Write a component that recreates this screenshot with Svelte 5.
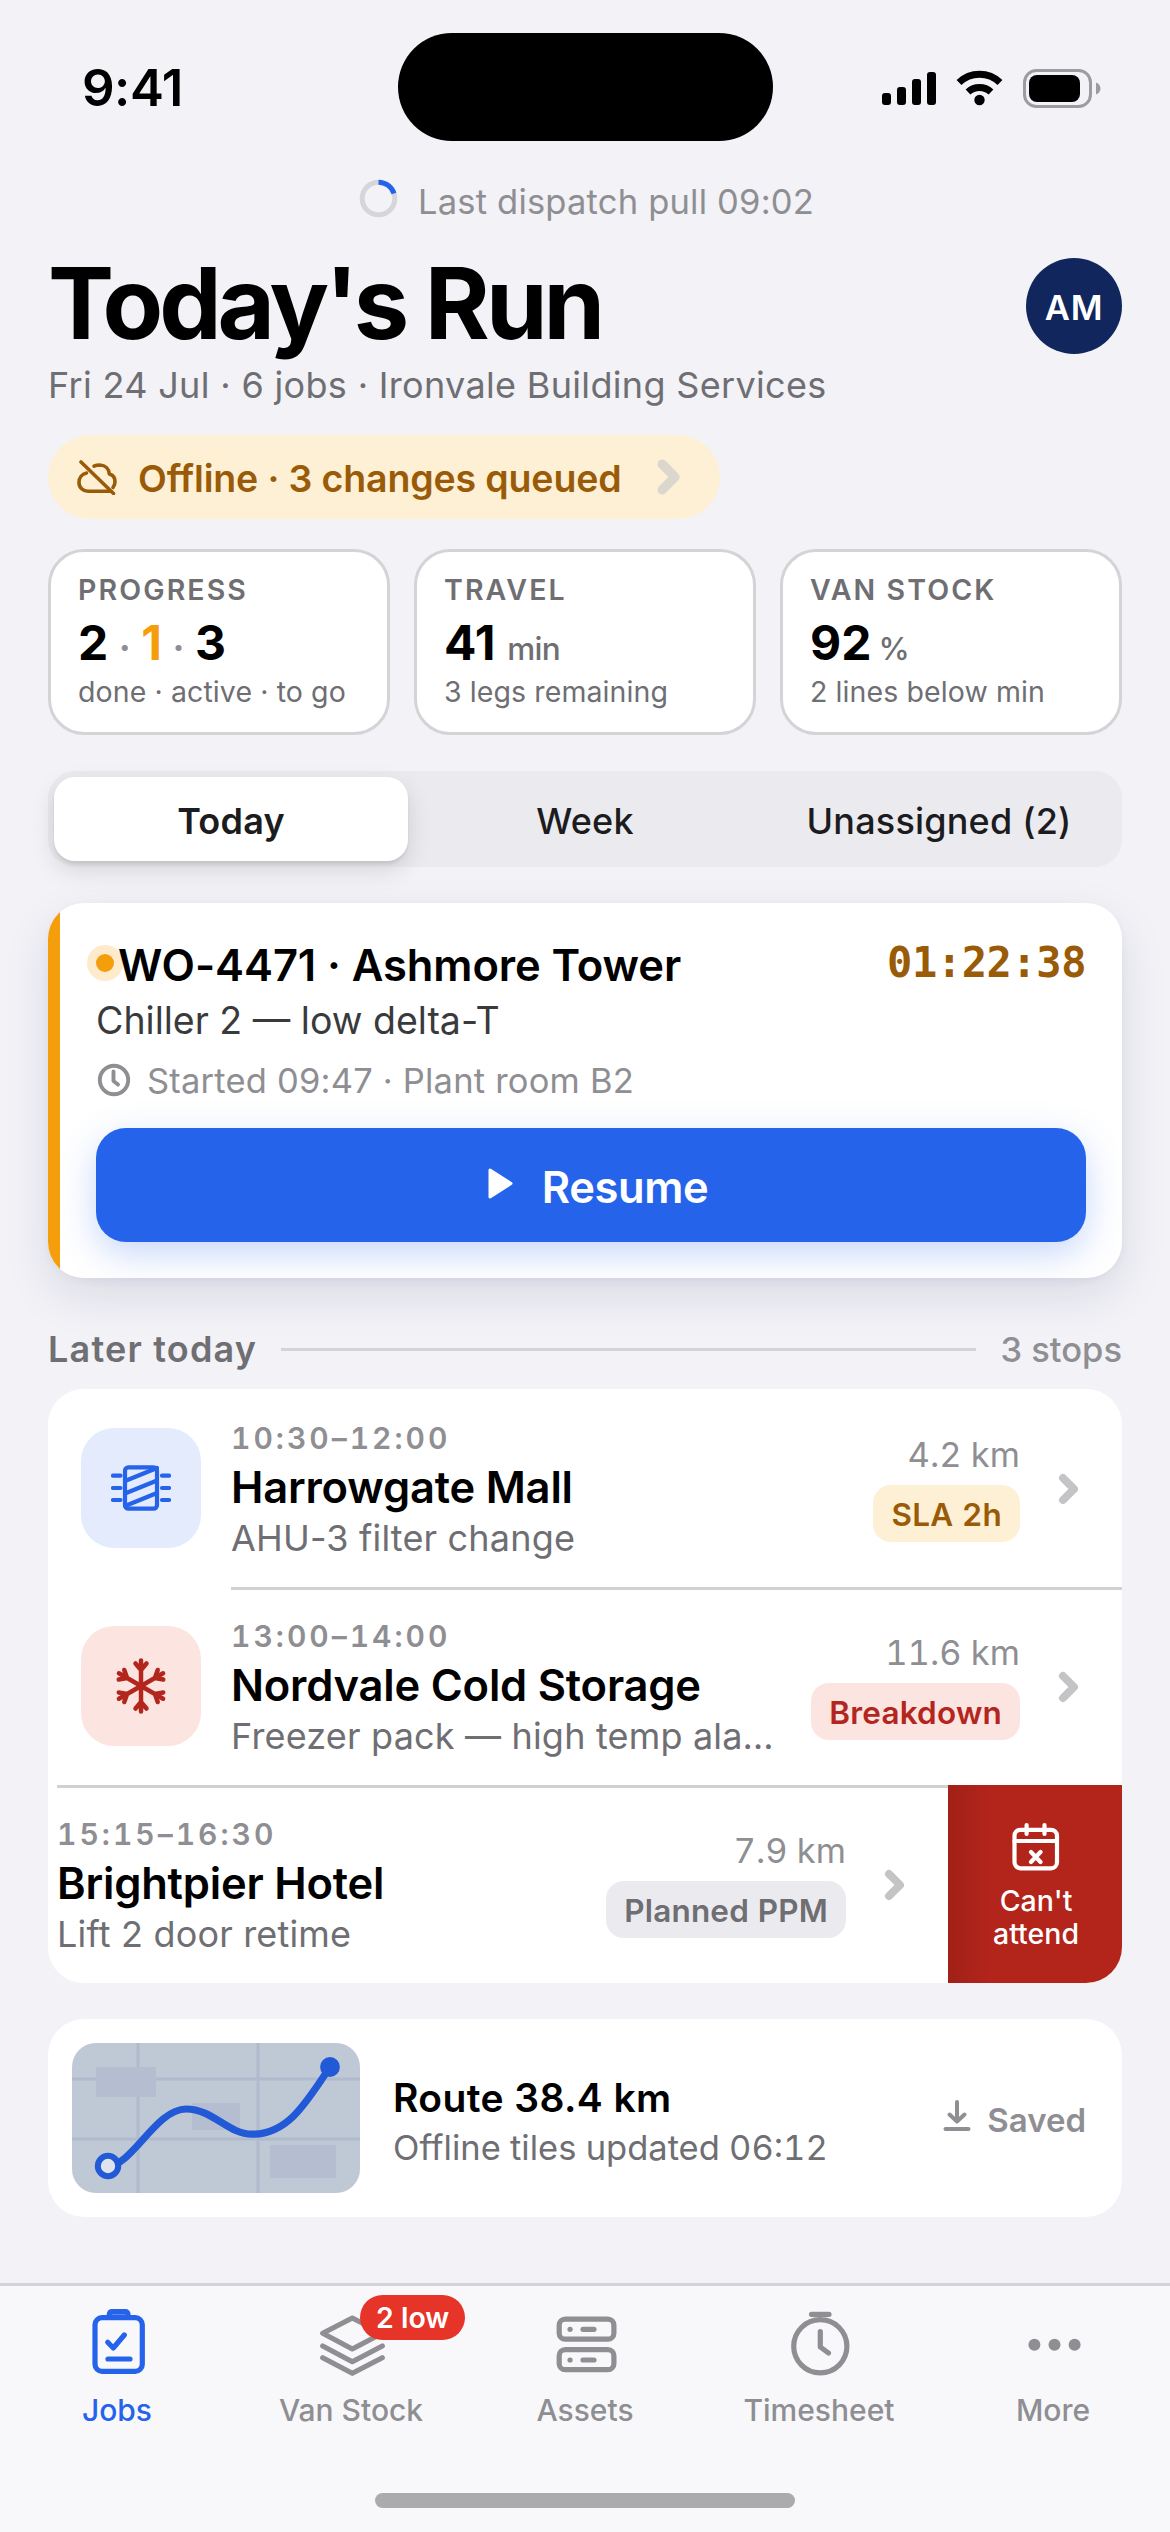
<script>
  const segments = ["Today", "Week", "Unassigned (2)"];
  let selected = "Today";

  const stops = [
    {
      time: "10:30–12:00",
      name: "Harrowgate Mall",
      task: "AHU-3 filter change",
      distance: "4.2 km",
      tag: "SLA 2h",
      tone: "amber",
      icon: "coil"
    },
    {
      time: "13:00–14:00",
      name: "Nordvale Cold Storage",
      task: "Freezer pack — high temp alarm",
      distance: "11.6 km",
      tag: "Breakdown",
      tone: "red",
      icon: "snow"
    },
    {
      time: "15:15–16:30",
      name: "Brightpier Hotel",
      task: "Lift 2 door retime",
      distance: "7.9 km",
      tag: "Planned PPM",
      tone: "grey",
      icon: null,
      swiped: true
    }
  ];

  const tabs = [
    { label: "Jobs", icon: "jobs" },
    { label: "Van Stock", icon: "stock", badge: "2 low" },
    { label: "Assets", icon: "assets" },
    { label: "Timesheet", icon: "timer" },
    { label: "More", icon: "more" }
  ];
  let activeTab = "Jobs";
</script>

<style>
  :global(body) {
    background: #f2f2f7;
  }

  .screen {
    width: 1170px;
    height: 2532px;
    overflow: hidden;
    display: flex;
    flex-direction: column;
    background: #f2f2f7;
    color: #000;
    font-family: Inter, "Liberation Sans", sans-serif;
    font-size: 36px;
  }

  svg {
    display: block;
    flex: none;
    fill: none;
    stroke: currentColor;
    stroke-linecap: round;
    stroke-linejoin: round;
  }

  button {
    font: inherit;
    color: inherit;
    border: none;
    padding: 0;
    background: none;
  }

  h1,
  h2,
  h3,
  p {
    margin: 0;
  }

  /* status bar */
  .status {
    height: 174px;
    display: grid;
    grid-template-columns: 1fr 375px 1fr;
    align-items: center;
    box-sizing: border-box;
    flex: none;
  }

  .clock {
    font-size: 51px;
    font-weight: 600;
    letter-spacing: -0.5px;
    padding-left: 82px;
  }

  .island {
    height: 108px;
    border-radius: 54px;
    background: #000;
  }

  .signals {
    display: flex;
    align-items: center;
    justify-content: flex-end;
    padding-right: 68px;
    padding-top: 2px;
  }

  /* pull to refresh */
  .pull {
    height: 54px;
    display: flex;
    align-items: center;
    justify-content: center;
    gap: 20px;
    padding-left: 3px;
    color: #8e8e93;
    font-size: 34.5px;
    letter-spacing: 0.2px;
    flex: none;
  }

  .pull svg {
    margin-top: -6px;
  }

  main {
    padding: 0 48px;
  }

  .heading {
    margin-top: 21px;
    display: flex;
    justify-content: space-between;
    align-items: center;
  }

  h1 {
    font-size: 99px;
    line-height: 108px;
    font-weight: 700;
    letter-spacing: -3.96px;
  }

  .avatar {
    width: 96px;
    height: 96px;
    box-sizing: border-box;
    padding-top: 2px;
    margin-top: 6px;
    border-radius: 50%;
    background: #10265c;
    color: #fff;
    display: flex;
    align-items: center;
    justify-content: center;
    font-size: 34.5px;
    font-weight: 600;
    letter-spacing: 0.9px;
  }

  .subtitle {
    margin-top: 6px;
    line-height: 45px;
    letter-spacing: 0.33px;
    color: #6e6e73;
  }

  .offline {
    margin-top: 27px;
    width: 672px;
    height: 84px;
    border-radius: 42px;
    box-sizing: border-box;
    padding: 0 38px 0 28px;
    display: flex;
    align-items: center;
    background: #fdf0d5;
    color: #9a5b08;
    font-size: 37.5px;
    font-weight: 600;
    letter-spacing: -0.15px;
  }

  .offline span {
    margin: 2px auto 0 20px;
  }

  /* stat cards */
  .stats {
    margin-top: 30px;
    display: grid;
    grid-template-columns: repeat(3, 1fr);
    gap: 24px;
  }

  .stat {
    height: 186px;
    box-sizing: border-box;
    border: 3px solid #d4d4d7;
    border-radius: 36px;
    background: #fff;
    padding: 24px 27px;
    color: #6e6e73;
  }

  .stat h3 {
    font-size: 28.5px;
    line-height: 28px;
    font-weight: 600;
    letter-spacing: 2.1px;
  }

  .value {
    margin-top: 6px;
    height: 66px;
    line-height: 66px;
    font-size: 48px;
    font-weight: 700;
    color: #000;
    white-space: nowrap;
  }

  .value i {
    font-style: normal;
    color: #8e8e93;
    font-size: 36px;
    margin: 0 10.5px;
  }

  .value em {
    font-style: normal;
    color: #f59e0b;
  }

  .value small {
    font-size: 31.5px;
    font-weight: 500;
    letter-spacing: -0.7px;
    color: #6e6e73;
    margin-left: 12px;
  }

  .value .percent {
    margin-left: 7px;
  }

  .stat p:last-child {
    font-size: 28.5px;
    line-height: 32px;
    letter-spacing: 0.1px;
    white-space: nowrap;
  }

  /* segmented control */
  .segments {
    margin-top: 36px;
    height: 96px;
    box-sizing: border-box;
    padding: 6px;
    border-radius: 27px;
    background: #ebebef;
    display: grid;
    grid-template-columns: repeat(3, 1fr);
  }

  .segments button {
    border-radius: 21px;
    font-weight: 500;
    letter-spacing: 0.2px;
    color: #1c1c1e;
    padding-top: 3px;
  }

  .segments .on {
    background: #fff;
    font-weight: 600;
    box-shadow: 0 3px 3px rgba(0, 0, 0, 0.08), 0 9px 24px rgba(0, 0, 0, 0.12);
  }

  /* active job */
  .active {
    margin-top: 36px;
    height: 375px;
    box-sizing: border-box;
    padding: 36px 36px 36px 48px;
    border-radius: 36px;
    background: linear-gradient(to right, #f59e0b 12px, #fff 12px);
    box-shadow: 0 3px 9px rgba(16, 24, 64, 0.04),
      0 18px 48px rgba(16, 24, 64, 0.1);
  }

  .job {
    display: flex;
    align-items: center;
    height: 52px;
  }

  .dot {
    width: 18px;
    height: 18px;
    margin: -4px 4px 0 0;
    border-radius: 50%;
    background: #f59e0b;
    box-shadow: 0 0 0 9px #fdebcb;
  }

  .job h2 {
    font-size: 43.5px;
    line-height: 52px;
    font-weight: 600;
    letter-spacing: -0.08px;
    white-space: nowrap;
  }

  .elapsed {
    margin: -5px 0 0 auto;
    font-family: "DejaVu Sans Mono", monospace;
    font-size: 42px;
    font-weight: 700;
    letter-spacing: -0.42px;
    color: #9a5b08;
  }

  .fault {
    margin-top: 7px;
    font-size: 37.5px;
    line-height: 46px;
    color: #3a3a3c;
  }

  .started {
    margin-top: 16px;
    height: 40px;
    display: flex;
    align-items: center;
    gap: 15px;
    font-size: 34.5px;
    letter-spacing: 0.2px;
    color: #8e8e93;
  }

  .resume {
    margin-top: 28px;
    width: 100%;
    height: 114px;
    border-radius: 30px;
    background: #2563eb;
    color: #fff;
    font-size: 43.5px;
    font-weight: 600;
    letter-spacing: -0.4px;
    display: flex;
    align-items: center;
    justify-content: center;
    gap: 27px;
    padding-left: 13px;
    box-shadow: 0 12px 36px rgba(37, 99, 235, 0.25);
  }

  .resume svg {
    margin-top: -3px;
  }

  .resume span {
    padding-top: 3px;
  }

  /* later today */
  .section {
    margin: 48px 0 17px;
    height: 46px;
    display: flex;
    align-items: center;
    color: #6e6e73;
  }

  .section h2 {
    font-size: 36px;
    font-weight: 600;
    letter-spacing: 1.2px;
  }

  .section hr {
    flex: 1;
    height: 3px;
    border: none;
    margin: 0 24px;
    background: #d4d4d7;
  }

  .section span {
    font-size: 34.5px;
    font-weight: 500;
    color: #8e8e93;
  }

  .stops {
    border-radius: 36px;
    overflow: hidden;
    background: #fff;
  }

  .stop {
    display: flex;
    height: 198px;
    background: #fff;
  }

  .tile {
    width: 120px;
    height: 120px;
    margin: 39px 30px 0 33px;
    border-radius: 33px;
    display: flex;
    align-items: center;
    justify-content: center;
    flex: none;
  }

  .tile.amber {
    background: #e3ebfd;
    color: #2563eb;
  }

  .tile.red {
    background: #fce4e1;
    color: #b3261e;
  }

  .row {
    flex: 1;
    min-width: 0;
    display: flex;
    box-sizing: border-box;
    padding-right: 42px;
  }

  .stop + .stop .row {
    box-shadow: inset 0 3px #d1d1d4;
  }

  .info {
    flex: 1;
    min-width: 0;
    padding: 31px 33px 0 0;
  }

  .info p,
  .info h3 {
    white-space: nowrap;
    overflow: hidden;
    text-overflow: ellipsis;
  }

  .info .time {
    font-size: 30px;
    line-height: 36px;
    font-weight: 600;
    font-variant-numeric: tabular-nums;
    letter-spacing: 3px;
    color: #8e8e93;
  }

  .info h3 {
    margin-top: 3px;
    font-size: 43.5px;
    line-height: 56px;
    font-weight: 600;
    letter-spacing: -0.2px;
  }

  .info .task {
    margin-top: 1px;
    font-size: 36px;
    line-height: 44px;
    letter-spacing: 0.18px;
    color: #6e6e73;
  }

  .meta {
    display: flex;
    flex-direction: column;
    align-items: flex-end;
    padding-top: 48px;
    font-size: 34.5px;
    font-variant-numeric: tabular-nums;
    line-height: 36px;
    color: #8e8e93;
  }

  .tag {
    margin-top: 12px;
    height: 57px;
    line-height: 60px;
    padding: 0 18px;
    border-radius: 18px;
    font-size: 31.5px;
    font-weight: 600;
    letter-spacing: 0.2px;
  }

  .tag.amber {
    background: #fdf0d5;
    color: #9a5b08;
  }

  .tag.red {
    background: #fce4e1;
    color: #b3261e;
  }

  .tag.grey {
    background: #ebebef;
    color: #6e6e73;
  }

  .chevron {
    width: 24px;
    height: 36px;
    color: #c4c4c7;
    stroke-width: 8;
  }

  .row .chevron {
    margin: 82px 0 0 36px;
  }

  .offline .chevron {
    width: 28px;
    height: 42px;
    color: #dcd7cc;
  }

  .swiped .row {
    margin-left: 9px;
  }

  .cant {
    width: 174px;
    flex: none;
    background: linear-gradient(to right, #a12017, #b3241b 42px);
    color: #fff;
    font-size: 28.5px;
    line-height: 33px;
    font-weight: 500;
    display: flex;
    flex-direction: column;
    align-items: center;
    padding: 35px 0 0 2px;
    box-sizing: border-box;
  }

  .cant span {
    margin-top: 10px;
    width: 110px;
    text-align: center;
  }

  /* route */
  .route {
    margin-top: 36px;
    height: 198px;
    box-sizing: border-box;
    border-radius: 36px;
    padding: 0 36px 0 24px;
    background: #fff;
    display: flex;
    align-items: center;
  }

  .map {
    width: 288px;
    height: 150px;
    border-radius: 24px;
    background: #bfc8d5;
  }

  .route div {
    padding: 8px 0 0 33px;
    flex: 1;
  }

  .route h3 {
    font-size: 39px;
    line-height: 48px;
    font-weight: 600;
    letter-spacing: 0.4px;
  }

  .route p {
    margin-top: 4px;
    line-height: 44px;
    font-size: 34.5px;
    font-variant-numeric: tabular-nums;
    color: #6e6e73;
  }

  .saved {
    display: flex;
    align-items: center;
    gap: 15px;
    font-size: 33px;
    font-weight: 600;
    color: #8e8e93;
  }

  .saved svg {
    margin-top: -6px;
  }

  .saved span {
    padding-top: 4px;
  }

  /* tab bar */
  .tabs {
    position: relative;
    margin-top: auto;
    height: 249px;
    box-sizing: border-box;
    border-top: 3px solid #d4d4d7;
    background: #f8f8fb;
    padding-top: 20px;
    display: grid;
    grid-template-columns: repeat(5, 1fr);
    align-items: start;
    flex: none;
  }

  .tabs button {
    position: relative;
    display: flex;
    flex-direction: column;
    align-items: center;
    color: #8e8e93;
    font-size: 30px;
    line-height: 36px;
    font-weight: 500;
    gap: 14px;
  }

  .tabs .current {
    color: #2563eb;
  }

  .tabs svg {
    stroke-width: 5.2;
  }

  .badge {
    position: absolute;
    left: 126px;
    top: -11px;
    height: 45px;
    line-height: 46px;
    padding: 0 16px;
    border-radius: 23px;
    background: #e63429;
    color: #fff;
    font-size: 28.5px;
    font-weight: 600;
    white-space: nowrap;
  }

  .home {
    position: absolute;
    left: 375px;
    bottom: 24px;
    width: 420px;
    height: 15px;
    border-radius: 8px;
    background: #ababad;
  }
</style>

{#snippet chevron()}
  <svg class="chevron" viewBox="0 0 24 36"><path d="M7 7l11 11L7 29" /></svg>
{/snippet}

<div class="screen">
  <header class="status">
    <span class="clock">9:41</span>
    <span class="island"></span>
    <span class="signals">
      <svg width="220" height="42" viewBox="0 0 220 42">
        <g fill="#000" stroke="none">
          <rect x="0" y="26" width="9" height="12" rx="3" />
          <rect x="15" y="20" width="9" height="18" rx="3" />
          <rect x="30" y="12" width="9" height="26" rx="3" />
          <rect x="45" y="5" width="9" height="33" rx="3" />
          <circle cx="97.5" cy="33" r="5.2" />
          <rect x="147" y="8" width="51" height="27" rx="8" />
        </g>
        <path d="M77 15.5A29.5 29.5 0 0 1 118 15.5" stroke="#000" stroke-width="7" stroke-linecap="butt" />
        <path d="M86 25A17 17 0 0 1 109 25" stroke="#000" stroke-width="7" stroke-linecap="butt" />
        <rect x="142.5" y="3.5" width="66" height="36" rx="12" stroke="#9c9ca0" stroke-width="3" />
        <path d="M214 15.5C220 17.5 220 25.5 214 27.5Z" fill="#9c9ca0" stroke="none" />
      </svg>
    </span>
  </header>

  <div class="pull">
    <svg width="39" height="39" viewBox="0 0 39 39" stroke-width="5">
      <circle cx="19.5" cy="19.5" r="16.3" stroke="#d6d6da" />
      <path d="M19.5 3.2A16.3 16.3 0 0 1 35 14.5" stroke="#2563eb" stroke-linecap="butt" />
    </svg>
    <span>Last dispatch pull 09:02</span>
  </div>

  <main>
    <div class="heading">
      <h1>Today's Run</h1>
      <span class="avatar">AM</span>
    </div>
    <p class="subtitle">Fri 24 Jul · 6 jobs · Ironvale Building Services</p>

    <button class="offline">
      <svg width="42" height="36" viewBox="0 0 42 36" stroke-width="3.6">
        <path d="M5 3L37.5 34.5" />
        <path d="M10.5 14C6 15 3 19 3 23.5C3 28.5 7 32.3 12 32.3H34" />
        <path d="M18 7.2C20 6.2 22 6 24 6C29.5 6.2 33 10 33.3 15C37 16 39 19 39 22.5C39 25 38.3 27 37 28.5" />
      </svg>
      <span>Offline · 3 changes queued</span>
      {@render chevron()}
    </button>

    <section class="stats">
      <div class="stat">
        <h3>PROGRESS</h3>
        <p class="value">2<i>·</i><em>1</em><i>·</i>3</p>
        <p>done · active · to go</p>
      </div>
      <div class="stat">
        <h3>TRAVEL</h3>
        <p class="value">41<small>min</small></p>
        <p>3 legs remaining</p>
      </div>
      <div class="stat">
        <h3>VAN STOCK</h3>
        <p class="value">92<small class="percent">%</small></p>
        <p>2 lines below min</p>
      </div>
    </section>

    <nav class="segments">
      {#each segments as segment}
        <button class:on={segment === selected} on:click={() => (selected = segment)}>{segment}</button>
      {/each}
    </nav>

    <section class="active">
      <div class="job">
        <span class="dot"></span>
        <h2>WO-4471 · Ashmore Tower</h2>
        <span class="elapsed">01:22:38</span>
      </div>
      <p class="fault">Chiller 2 — low delta-T</p>
      <p class="started">
        <svg width="36" height="36" viewBox="0 0 36 36" stroke-width="3.9">
          <circle cx="18" cy="18" r="14.2" />
          <path d="M17.5 9.5V19L22 22.5" />
        </svg>
        <span>Started 09:47 · Plant room B2</span>
      </p>
      <button class="resume">
        <svg width="28" height="33" viewBox="0 0 28 33">
          <path d="M3 3L24 16.5L3 30Z" fill="#fff" stroke-width="3" />
        </svg>
        <span>Resume</span>
      </button>
    </section>

    <div class="section">
      <h2>Later today</h2>
      <hr />
      <span>3 stops</span>
    </div>

    <section class="stops">
      {#each stops as stop}
        <article class="stop" class:swiped={stop.swiped}>
          {#if stop.icon}
            <span class="tile {stop.tone}">
              {#if stop.icon === "coil"}
                <svg width="60" height="60" viewBox="0 0 60 60" stroke-width="4.2">
                  <rect x="14" y="9.3" width="32" height="41.4" rx="3.5" />
                  <path d="M2 17.7H9.5M2 30H9.5M2 42H9.5M51 17.7H58M51 30H58M51 42H58" />
                  <path d="M14 23L46 10M14 35.5L46 22.5M14 48L46 35" />
                </svg>
              {:else}
                <svg width="60" height="60" viewBox="-30 -30 60 60" stroke-width="4.5">
                  {#each [0, 60, 120, 180, 240, 300] as angle}
                    <path d="M0 0V-25.5M-5.5 -22.5L0 -16L5.5 -22.5" transform="rotate({angle})" />
                  {/each}
                </svg>
              {/if}
            </span>
          {/if}
          <div class="row">
            <div class="info">
              <p class="time">{stop.time}</p>
              <h3>{stop.name}</h3>
              <p class="task">{stop.task}</p>
            </div>
            <div class="meta">
              <span>{stop.distance}</span>
              <span class="tag {stop.tone}">{stop.tag}</span>
            </div>
            {@render chevron()}
          </div>
          {#if stop.swiped}
            <button class="cant">
              <svg width="54" height="54" viewBox="0 0 54 54" stroke-width="4.2">
                <rect x="5.5" y="9.8" width="42.5" height="38.5" rx="6" />
                <path d="M17.6 5V14M35.5 5V14M5.5 21H48M22 32L31.5 42M31.5 32L22 42" />
              </svg>
              <span>Can't attend</span>
            </button>
          {/if}
        </article>
      {/each}
    </section>

    <section class="route">
      <svg class="map" viewBox="0 0 96 50">
        <path d="M0 12H96M0 32H96M22 0V50M62 0V50" stroke="#b0bacd" stroke-width="1" />
        <g fill="#b5bdd0" stroke="none">
          <rect x="8" y="8" width="20" height="10" />
          <rect x="40" y="20" width="16" height="9" />
          <rect x="66" y="34" width="22" height="11" />
        </g>
        <path d="M12 41C20 41 28 22 38 22C47 22 52 30.4 60 30.4C72 30.4 78 20 86 8" stroke="#2159d6" stroke-width="2.4" />
        <circle cx="12" cy="41" r="3.4" fill="#dfe4ec" stroke="#2159d6" stroke-width="2" />
        <circle cx="86" cy="8" r="3.3" fill="#2159d6" stroke="none" />
      </svg>
      <div>
        <h3>Route 38.4 km</h3>
        <p>Offline tiles updated 06:12</p>
      </div>
      <span class="saved">
        <svg width="30" height="33" viewBox="0 0 30 33" stroke-width="4">
          <path d="M15 3V22M7.5 15.5L15 22.5L22.5 15.5M3.5 30H26.5" />
        </svg>
        <span>Saved</span>
      </span>
    </section>
  </main>

  <nav class="tabs">
    {#each tabs as tab}
      <button class:current={tab.label === activeTab} on:click={() => (activeTab = tab.label)}>
        <svg width="72" height="72" viewBox="0 0 72 72">
          {#if tab.icon === "jobs"}
            <rect x="14" y="11.7" width="47.3" height="53.6" rx="7" />
            <rect x="28.3" y="5.7" width="18.7" height="5.5" rx="2.5" />
            <path d="M26.7 36.3L32.3 42L43.3 29M27 53H49" />
          {:else if tab.icon === "stock"}
            <path d="M7.7 27.3L37.3 12L67.3 27.3L37.3 43Z" />
            <path d="M7.7 40L37.3 55.7L67.3 40M7.7 51.7L37.3 67.3L67.3 51.7" />
          {:else if tab.icon === "assets"}
            <rect x="10.2" y="13.2" width="54.7" height="20" rx="6" />
            <rect x="10.2" y="43.7" width="54.7" height="20" rx="6" />
            <path d="M21 23.3H21.1M34 23.3H45M21 54H21.1M34 54H45" />
          {:else if tab.icon === "timer"}
            <circle cx="37.3" cy="40.3" r="26.6" />
            <path d="M28.5 8.3H46M37.3 25.5V41L45.5 47" />
          {:else}
            <g fill="currentColor" stroke="none">
              <circle cx="17.4" cy="38.7" r="6" />
              <circle cx="37.5" cy="38.7" r="6" />
              <circle cx="57.6" cy="38.7" r="6" />
            </g>
          {/if}
        </svg>
        <span>{tab.label}</span>
        {#if tab.badge}
          <span class="badge">{tab.badge}</span>
        {/if}
      </button>
    {/each}
    <span class="home"></span>
  </nav>
</div>
